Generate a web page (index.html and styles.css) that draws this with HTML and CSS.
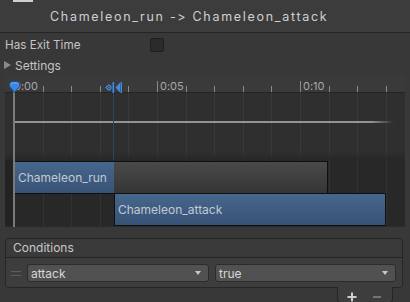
FILE: index.html
```html
<!DOCTYPE html>
<html>
<head>
<meta charset="utf-8">
<link rel="stylesheet" href="styles.css">
</head>
<body>
<div class="header">
  <div class="icon-stub"></div>
  <div class="title">Chameleon_run -&gt; Chameleon_attack</div>
</div>
<div class="prop-row">
  <span class="label">Has Exit Time</span>
  <span class="checkbox"></span>
</div>
<div class="foldout"><span class="tri"></span><span>Settings</span></div>
<div class="timeline">
  <div class="ruler">
    <span class="tick-label t0">0:00</span>
    <span class="tick-label major t5">0:05</span>
    <span class="tick-label major t10">0:10</span>
  </div>
  <div class="curve-area"><div class="curve"></div></div>
  <div class="clip-area">
    <div class="clip clip-src"><div class="clip-blue">Chameleon_run</div></div>
    <div class="clip clip-dst">Chameleon_attack</div>
  </div>
  <div class="playhead-line"></div>
  <div class="transition-line"></div>
  <svg class="playhead" width="11" height="12" viewBox="0 0 11 12">
    <path d="M0.5 3.5 Q0.5 0.5 3.5 0.5 H7.5 Q10.5 0.5 10.5 3.5 V5.5 L5.5 11.5 L0.5 5.5 Z" fill="#3a86e0" stroke="#1d4f8f" stroke-width="1"/>
    <path d="M2 3.5 Q2 2 3.5 2 H7.5 Q9 2 9 3.5" fill="none" stroke="#6fb0ff" stroke-width="1"/>
  </svg>
  <svg class="markers" width="18" height="12" viewBox="0 0 18 12">
    <path d="M1 6.5 L3.5 4 Q6 4 6 6.5 Q6 9 3.5 9 Z" fill="none" stroke="#3f8ae4" stroke-width="1.2"/>
    <circle cx="4" cy="6.5" r="0.9" fill="#3f8ae4"/>
    <rect x="7.5" y="1" width="1.6" height="11" fill="#3f8ae4"/>
    <path d="M10.5 6.5 L15 1.5 L15 11.5 Z" fill="#3f8ae4"/>
    <rect x="15.5" y="1" width="1.5" height="11" fill="#3f8ae4"/>
  </svg>
</div>
<div class="conditions">
  <div class="cond-header">Conditions</div>
  <div class="cond-body">
    <div class="cond-row">
      <span class="handle"></span>
      <div class="dropdown dd-param"><span>attack</span><span class="arrow"></span></div>
      <div class="dropdown dd-value"><span>true</span><span class="arrow"></span></div>
    </div>
  </div>
</div>
<div class="footer">
  <div class="buttons">
    <svg class="btn-icon" width="10" height="10" viewBox="0 0 10 10" aria-label="add">
      <rect x="4" y="0.5" width="2" height="9" fill="#cfcfcf"/>
      <rect x="0.5" y="4" width="9" height="2" fill="#cfcfcf"/>
    </svg>
    <svg class="btn-icon" width="10" height="10" viewBox="0 0 10 10" aria-label="remove">
      <rect x="1" y="4" width="8" height="2" fill="#747474"/>
    </svg>
  </div>
</div>
</body>
</html>
```
FILE: styles.css
```css
* { box-sizing: border-box; }
html, body { margin: 0; padding: 0; }
body {
  width: 410px;
  height: 302px;
  overflow: hidden;
  background: #383838;
  font-family: Inter, "Noto Sans", sans-serif;
  font-size: 12px;
  font-feature-settings: "calt" 0, "liga" 0;
  font-variant-ligatures: none;
  color: #c4c4c4;
}

.header {
  height: 33px;
  border-bottom: 1px solid #232323;
  background: #3c3c3c;
  display: flex;
  align-items: flex-start;
  padding-left: 13px;
}
.icon-stub {
  flex: none;
  width: 20px;
  height: 2px;
  background: #cfcfcf;
}
.title {
  margin-left: 17px;
  margin-top: 9px;
  font-size: 12.5px;
  line-height: 15px;
  letter-spacing: 1.7px;
  color: #d0d0d0;
  white-space: nowrap;
}

.prop-row {
  display: flex;
  align-items: center;
  height: 18px;
  margin-top: 3px;
  padding-left: 5px;
}
.prop-row .label { width: 145px; font-size: 11.7px; }
.checkbox {
  width: 14px;
  height: 14px;
  border: 1px solid #1f1f1f;
  background: #2b2b2b;
  border-radius: 2px;
}

.foldout {
  display: flex;
  align-items: center;
  gap: 4px;
  height: 18px;
  margin-top: 2px;
  padding-left: 4px;
}
.tri {
  width: 0;
  height: 0;
  border-left: 7px solid #8a8a8a;
  border-top: 4.5px solid transparent;
  border-bottom: 4.5px solid transparent;
}

.timeline {
  position: relative;
  margin: 2px 5px 0;
  height: 151px;
  background: #2a2a2a;
  overflow: hidden;
}
.ruler {
  position: relative;
  height: 17px;
  border-bottom: 1px solid #252525;
  background:
    repeating-linear-gradient(90deg, #8a8a8a 0 1px, transparent 1px 28.6px) 9px 100% / 100% 6px no-repeat,
    #3a3a3a;
}
.tick-label {
  position: absolute;
  top: 5px;
  font-size: 11px;
  line-height: 11px;
  color: #a8a8a8;
}
.tick-label.major {
  border-left: 1px solid #8a8a8a;
  padding-left: 2px;
  height: 11px;
  top: 5px;
}
.t0 { left: 9px; }
.t5 { left: 152px; }
.t10 { left: 295px; }

.curve-area {
  height: 67px;
  padding-top: 28px;
  background:
    linear-gradient(to bottom, transparent 58px, #272727 67px),
    repeating-linear-gradient(90deg, #3a3a3a 0 1px, transparent 1px 28.6px) 9px 0 / 100% 100% no-repeat,
    #2f2f2f;
}
.curve {
  margin-left: 9px;
  width: 380px;
  height: 2px;
  background: linear-gradient(to right, #939393 0, #939393 94%, rgba(147,147,147,0) 100%);
}

.clip-area {
  height: 66px;
  padding-top: 1px;
  background:
    linear-gradient(90deg, #232323 0 9px, transparent 9px),
    repeating-linear-gradient(90deg, #323232 0 1px, transparent 1px 28.6px) 9px 0 / 100% 100% no-repeat,
    #282828;
}
.clip {
  height: 33px;
  border: 1px solid #0f0f0f;
  line-height: 31px;
  color: #c3c9d1;
  white-space: nowrap;
}
.clip-src {
  margin-left: 9px;
  width: 314px;
  display: flex;
  background: linear-gradient(#4a4a4a, #353535);
}
.clip-blue {
  width: 99px;
  padding-left: 3px;
  background: linear-gradient(#47678e, #375275);
}
.clip-dst {
  margin-left: 109px;
  margin-top: -1px;
  width: 272px;
  padding-left: 3px;
  background: linear-gradient(#47678e, #375275);
}

.playhead-line {
  position: absolute;
  left: 8px;
  top: 16px;
  width: 2px;
  height: 135px;
  background: #7a7a7a;
}
.transition-line {
  position: absolute;
  left: 108px;
  top: 17px;
  width: 1px;
  height: 67px;
  background: #2e4462;
}
.playhead {
  position: absolute;
  left: 4px;
  top: 5px;
}
.markers {
  position: absolute;
  left: 100px;
  top: 5px;
}

.conditions {
  margin: 11px 7px 0 5px;
  border: 1px solid #252525;
  border-radius: 4px;
  overflow: hidden;
}
.cond-header {
  height: 19px;
  line-height: 18px;
  padding-left: 7px;
  border-bottom: 1px solid #252525;
  background: #3a3a3a;
  color: #c8c8c8;
}
.cond-body {
  height: 29px;
  background: #3d3d3d;
  padding-top: 6px;
}
.cond-row {
  display: flex;
  align-items: center;
}
.handle {
  width: 10px;
  height: 5px;
  margin-left: 5px;
  border-top: 1px solid #5c5c5c;
  border-bottom: 1px solid #5c5c5c;
}
.dropdown {
  display: flex;
  align-items: center;
  justify-content: space-between;
  height: 18px;
  padding: 0 7px 0 3px;
  border: 1px solid #2c2c2c;
  border-radius: 3px;
  background: #515151;
  color: #d6d6d6;
}
.dd-param { margin-left: 6px; width: 182px; }
.dd-value { margin-left: 6px; width: 181px; }
.arrow {
  width: 0;
  height: 0;
  border-top: 4px solid #c8c8c8;
  border-left: 3.5px solid transparent;
  border-right: 3.5px solid transparent;
}

.footer {
  display: flex;
  justify-content: flex-end;
  padding-right: 17px;
}
.buttons {
  width: 56px;
  height: 16px;
  margin-top: -1px;
  border: 1px solid #252525;
  border-top: none;
  border-radius: 0 0 4px 4px;
  background: #3d3d3d;
  display: flex;
  align-items: flex-start;
  padding: 5px 0 0 9px;
  gap: 15px;
}
.btn-icon { display: block; flex: none; }
```
